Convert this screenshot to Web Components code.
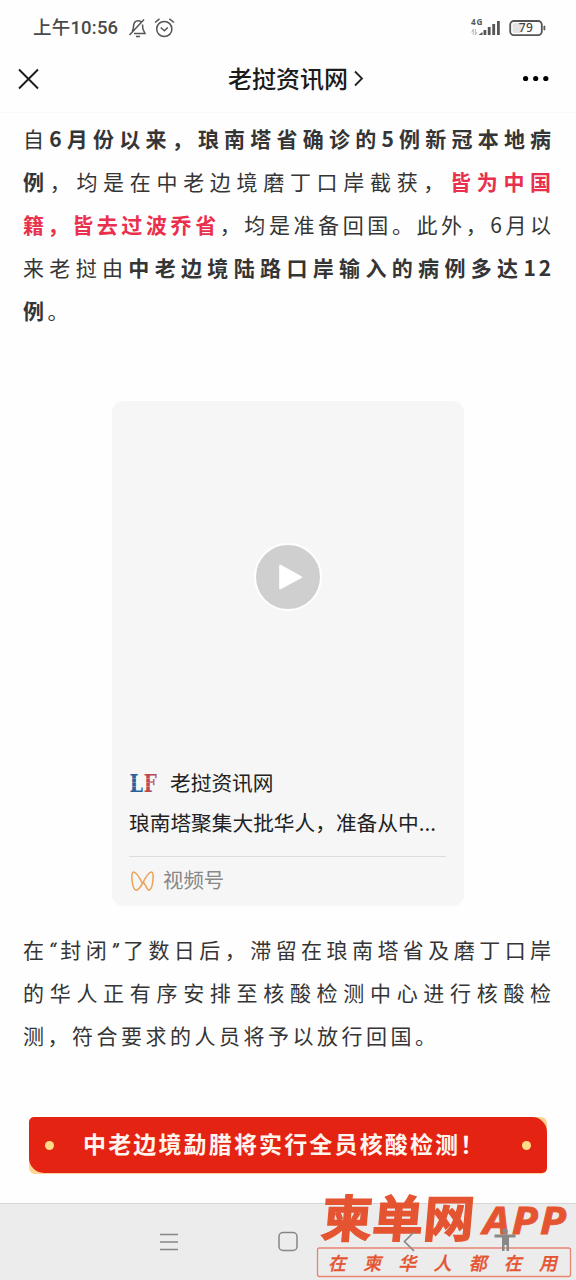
<!DOCTYPE html>
<html lang="zh-CN">
<head>
<meta charset="utf-8">
<title>老挝资讯网</title>
<style>
html,body{margin:0;background:#fefefe}
body{width:576px;height:1280px;overflow:hidden;font-family:"Noto Sans CJK SC",sans-serif;color:#353535}
</style>
</head>
<body>
<article-screen></article-screen>
<script>
const define=(name,html)=>customElements.define(name,class extends HTMLElement{
  constructor(){super();this.attachShadow({mode:'open'}).innerHTML=html;}
});

define('status-bar',`<style>
:host{display:flex;height:56px;align-items:center;padding:0 29px 0 33px;box-sizing:border-box;color:#4a4a4a}
.time{font:500 18.5px/24px Roboto,"Noto Sans CJK SC",sans-serif;width:86px;white-space:nowrap;margin-right:9px;letter-spacing:.2px}
.sp{flex:1}svg{display:block;flex:none;overflow:visible}
text{font-family:"Noto Sans",sans-serif}
</style>
<span class="time">上午10:56</span>
<svg width="48" height="22" viewBox="0 0 48 22" fill="none" stroke="#555" stroke-width="1.5">
<path d="M1.5 18 16 2.5M4.2 14.5c1-1.4 1.2-3 1.3-5 .2-3.7 2-5.7 4.7-5.7 1.2 0 2.1.4 2.8 1M14.5 7.500l.4 4.500 2.100 4.500H6M8 19.400h4"/>
<circle cx="36.3" cy="12" r="7.6"/><path d="m32.700 10.500 3.700 3.200 3.400-3.200M27 5.500l4.500-3.700M41.400 1.800 46 5.500"/></svg>
<span class="sp"></span>
<svg width="76" height="24" viewBox="0 0 76 24">
<text x="0" y="8.500" font-size="8.200" font-weight="700" textLength="11.500" fill="#555">4G</text>
<path d="M.8 16.500 2.300 13v6M4.500 13v6l1.300-3" stroke="#bbb" fill="none"/>
<path d="m7.500 19 4-3v3zM12.500 14h2.800v5h-2.800zM16.800 11h2.800v8h-2.800zM21.300 8h2.800v11h-2.800zM26 5h2.800v14H26z" fill="#555"/>
<rect x="39.2" y="5" width="31.6" height="14.2" rx="3.7" fill="none" stroke="#555" stroke-width="1.8"/>
<rect x="41.5" y="7" width="9" height="10" rx="2" fill="#e3e3e3"/>
<path d="M72.900 10h1v4h-1z" fill="#555" stroke="#555" stroke-width=".7"/>
<text x="47.800" y="16.400" font-size="12" font-weight="500" textLength="14" fill="#444">79</text></svg>`);

define('title-bar',`<style>
:host{display:grid;grid-template-columns:60px 1fr 60px;height:57px;align-items:center;box-sizing:border-box;padding-bottom:12px;border-bottom:1px solid #f8f8f8}
svg{display:block}
.t{display:flex;justify-content:center;align-items:center;gap:6px;font:500 24px/34px "Noto Sans CJK SC",sans-serif;color:#1b1b1b;padding-left:16px}
.t slot{display:block}
svg{position:relative;top:1px}
</style>
<svg width="40" height="24" viewBox="0 0 40 24" style="margin-left:18px" fill="none" stroke="#1b1b1b" stroke-width="1.9"><path d="m1 2.500 19 19M20 2.500l-19 19"/></svg>
<div class="t"><span><slot></slot></span><svg width="10" height="18" viewBox="0 0 10 18" fill="none" stroke="#222" stroke-width="1.8"><path d="m1 1.500 7 7-7 7"/></svg></div>
<svg width="28" height="8" viewBox="0 0 28 8" style="margin-left:6px"><circle cx="3.600" cy="3.500" r="2.600"/><circle cx="13.700" cy="3.500" r="2.600"/><circle cx="23.800" cy="3.500" r="2.600"/></svg>`);

define('article-line',`<style>
:host{display:block;height:43px;font-size:21px;line-height:43px;white-space:nowrap;width:531px;letter-spacing:2.9px;text-align:justify;text-align-last:justify}
:host([last]){text-align-last:left;letter-spacing:3.5px}
::slotted(b){font-weight:700}
::slotted(b.red){color:#e9304c}
::slotted(q){quotes:none;font-family:Roboto,sans-serif;font-style:italic;letter-spacing:2.9px}
</style><slot></slot>`);

define('video-card',`<style>
:host{display:flex;flex-direction:column;width:352px;height:505px;box-sizing:border-box;padding:0 18px 0 17px;border-radius:11px;background:#f6f6f6;color:#222}
.media{height:351px;display:grid;place-items:center;flex:none}
svg{display:block;flex:none}
.row{display:flex;align-items:center}
.author{height:31px;margin-top:14px;font-size:20.7px}
.logo{width:29px;height:30px;margin-right:12px;overflow:visible}
.desc{font-size:20.7px;line-height:32px;margin-top:9px;white-space:nowrap}
.rule{height:1px;background:#dcdcdc;margin-top:18px}
.from{height:44px;font-size:20.4px;color:#888;gap:8px;padding-left:1px}
.from svg{position:relative;top:2px}
</style>
<div class="media"><svg width="68" height="68" viewBox="0 0 68 68"><circle cx="34" cy="34" r="33" fill="#cfcfcf" stroke="#fff" stroke-width="2"/><path d="M26.200 22.500v22.800L47 34.200z" fill="#fff" stroke="#fff" stroke-width="2" stroke-linejoin="round"/></svg></div>
<div class="row author"><svg class="logo" viewBox="0 0 29 30"><g font-family="DejaVu Serif" font-weight="700" font-size="25"><text x="0.500" y="25" textLength="13.500" lengthAdjust="spacingAndGlyphs" fill="#28619c">L</text><text x="14.700" y="25" textLength="13" lengthAdjust="spacingAndGlyphs" fill="#b94854">F</text></g><path d="M2 11.500h24M2 15.500h24M2 19.500h24" stroke="#fff" stroke-opacity=".35" stroke-width=".8"/></svg><span><slot name="author"></slot></span></div>
<div class="desc"><slot name="desc"></slot></div>
<div class="rule"></div>
<div class="row from"><svg width="25" height="22" viewBox="0 0 24 22" fill="none" stroke="#eaa45c" stroke-width="1.6"><path d="M12 13.500C9.500 8.500 6 1.800 3 2 0 2.500 1.500 19.500 5.500 20.200 8 20.500 10 17 12 13.500S16 20.500 18.500 20.200C22.500 19.500 24 2.500 21 2 18 1.800 14.500 8.500 12 13.500Z"/></svg><span>视频号</span></div>`);

define('alert-banner',`<style>
:host{display:block;width:518px;height:57px;background:#ffd391;border-radius:6px}
.in{display:flex;height:56px;align-items:center;justify-content:space-between;box-sizing:border-box;padding:0 16px;background:#e52313;border-radius:5px 15px 5px 15px}
i{width:9px;height:9px;border-radius:50%;background:#ffdb88}
span{font:700 23px/34px "Noto Sans CJK SC",sans-serif;color:#fff5ef;letter-spacing:2.15px;white-space:nowrap;width:412px;margin:0 0 5px 2px}
</style><div class="in"><i></i><span><slot></slot></span><i></i></div>`);

define('nav-bar',`<style>
:host{display:block;height:77px;box-sizing:border-box;border-top:1px solid #d6d6d6;background:#ececec}
svg{display:block}
</style><svg width="576" height="76" viewBox="0 0 576 76" fill="none" stroke="#858585" stroke-width="1.5"><path d="M160 30.500h18M160 38h18M160 45.500h18"/><rect x="279" y="28.500" width="18" height="18" rx="4"/></svg>`);

define('app-watermark',`<style>
:host{display:block;position:absolute;left:310px;top:1190px;width:266px;height:90px}
svg{display:block;overflow:visible}
</style><svg width="266" height="90" viewBox="0 0 266 90">
<g fill="#e55431" font-family="Noto Sans CJK SC">
<g transform="translate(10 47) skewX(-5)" font-weight="700" font-size="50" stroke="#e55431" stroke-width="1.3"><text x="0" y="0" textLength="153" lengthAdjust="spacingAndGlyphs">柬单网</text></g>
<g font-family="Open Sans" font-style="italic" font-weight="700" font-size="38" stroke="#e55431" stroke-width=".9" letter-spacing="2"><text x="173" y="44" textLength="85" lengthAdjust="spacingAndGlyphs">APP</text></g>
<g transform="translate(0 79.500) skewX(-13)" font-weight="500" font-size="18" stroke="#e55431" stroke-width=".3"><text x="18" y="0" textLength="229">在柬华人都在用</text></g>
</g>
<rect x="7.500" y="58" width="253" height="28.500" rx="2" fill="none" stroke="#e98470" stroke-width="1.3"/>
<path d="m104 42-9.500 9.500L104 61" fill="none" stroke="#888" stroke-width="1.7"/>
<g fill="#888"><circle cx="195" cy="41" r="2.700"/><path d="M184.500 44.500h21v3h-6.500V61h-2.500v-6h-2v6H192V47.500h-7.500z"/></g>
</svg>`);

define('article-screen',`<style>
:host{display:flex;flex-direction:column;width:576px;height:1280px;position:relative;overflow:hidden;background:#fefefe}
main{display:flex;flex-direction:column;flex:1;min-height:0;padding:4px 20px 0 23px;overflow:hidden}
video-card{margin:69px 0 22px 89px;flex:none}
article-line,alert-banner{flex:none}
alert-banner{margin:60px 0 0 6px}
</style>
<status-bar></status-bar>
<title-bar>老挝资讯网</title-bar>
<main>
<article-line>自<b>6月份以来，琅南塔省确诊的5例新冠本地病</b></article-line>
<article-line><b>例</b>，均是在中老边境磨丁口岸截获，<b class="red">皆为中国</b></article-line>
<article-line><b class="red">籍，皆去过波乔省</b>，均是准备回国。此外，6月以</article-line>
<article-line>来老挝由<b>中老边境陆路口岸输入的病例多达12</b></article-line>
<article-line last><b>例</b>。</article-line>
<video-card><span slot="author">老挝资讯网</span><span slot="desc">琅南塔聚集大批华人，准备从中...</span></video-card>
<article-line>在<q>“</q>封闭<q>”</q>了数日后，滞留在琅南塔省及磨丁口岸</article-line>
<article-line>的华人正有序安排至核酸检测中心进行核酸检</article-line>
<article-line last>测，符合要求的人员将予以放行回国。</article-line>
<alert-banner>中老边境勐腊将实行全员核酸检测！</alert-banner>
</main>
<nav-bar></nav-bar>
<app-watermark></app-watermark>`);
</script>
</body>
</html>
